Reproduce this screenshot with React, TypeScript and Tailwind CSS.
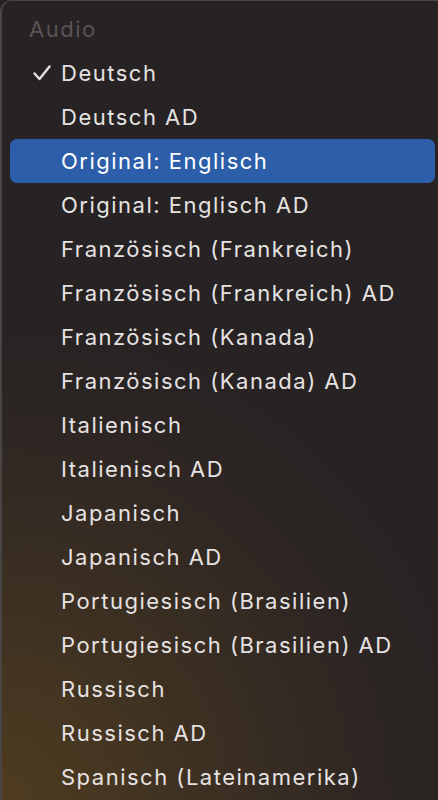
import React from 'react';

const items = [
  'Deutsch',
  'Deutsch AD',
  'Original: Englisch',
  'Original: Englisch AD',
  'Französisch (Frankreich)',
  'Französisch (Frankreich) AD',
  'Französisch (Kanada)',
  'Französisch (Kanada) AD',
  'Italienisch',
  'Italienisch AD',
  'Japanisch',
  'Japanisch AD',
  'Portugiesisch (Brasilien)',
  'Portugiesisch (Brasilien) AD',
  'Russisch',
  'Russisch AD',
  'Spanisch (Lateinamerika)',
];

const Check = () => (
  <svg width="18" height="16" viewBox="0 0 18 16" fill="none">
    <path d="M1.5 8.5 L6.5 14 L16.5 1.5" stroke="#e6e2e2" strokeWidth="2.4" strokeLinecap="round" strokeLinejoin="round" />
  </svg>
);

export default function App() {
  const selected = 'Deutsch';
  const highlighted = 'Original: Englisch';
  return (
    <div className="h-screen w-full overflow-hidden bg-[#272223]">
      <div
        className="h-full w-full rounded-tl-[12px] border-l-2 border-t border-[#4a4545] bg-[radial-gradient(circle_at_0%_100%,#4f3c20_0%,#3d3022_22%,#2a2423_45%,#272223_60%)] pt-[6px]"
        style={{ fontFamily: 'Inter, "Noto Sans", sans-serif' }}
      >
        <div className="flex h-[44px] items-center pl-[27px] text-[22px] tracking-[1.5px] text-[#595455]">Audio</div>
        <ul>
          {items.map((item) => (
            <li
              key={item}
              className={`ml-[8px] mr-[3px] flex h-[44px] items-center rounded-[7px] text-[22px] tracking-[1.5px] text-[#e6e2e2] ${
                item === highlighted ? 'bg-[#2d5ea9] text-white' : ''
              }`}
            >
              <span className="flex w-[51px] justify-end pr-[10px]">{item === selected && <Check />}</span>
              <span>{item}</span>
            </li>
          ))}
        </ul>
      </div>
    </div>
  );
}
